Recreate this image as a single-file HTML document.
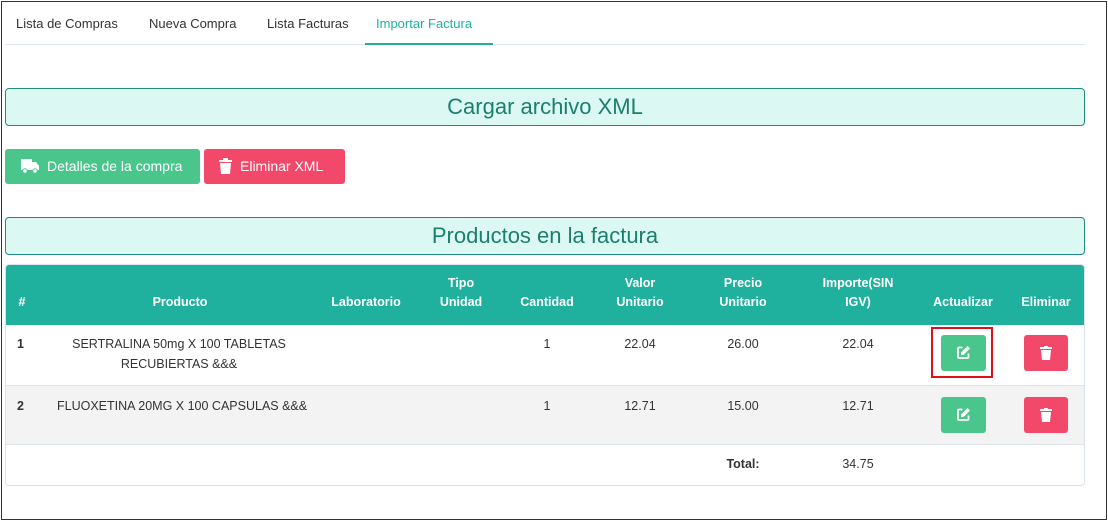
<!DOCTYPE html>
<html><head><meta charset="utf-8"><style>
*{box-sizing:border-box;margin:0;padding:0}
body{width:1108px;height:521px;background:#fff;font-family:"Liberation Sans",sans-serif;position:relative;overflow:hidden;color:#333}
.frame{position:absolute;left:1px;top:1px;width:1106px;height:519px;border:1px solid #333}
.abs{position:absolute}
.tab{position:absolute;top:16px;font-size:13px;color:#333}
.hbox{position:absolute;left:5px;width:1080px;height:38px;background:#dcf8f2;border:1px solid #1e8c7c;border-radius:4px;text-align:center;color:#1b7f6f;font-size:22px;line-height:36px}
.btn{position:absolute;top:149px;height:35px;border-radius:3px;color:#fff;font-size:14px;line-height:35px}
.th{position:absolute;color:#fff;font-weight:bold;font-size:12.5px;text-align:center;line-height:19px}
.td{position:absolute;font-size:12.5px;text-align:center;color:#333}
.eb{position:absolute;width:45px;height:36px;border-radius:3px;background:#4ac68d}
.db{position:absolute;width:44px;height:36px;border-radius:3px;background:#f2486a}
</style></head><body>
<div class="frame"></div>
<div class="tab" style="left:16px">Lista de Compras</div>
<div class="tab" style="left:149px">Nueva Compra</div>
<div class="tab" style="left:267px">Lista Facturas</div>
<div class="tab" style="left:376px;color:#20b09e">Importar Factura</div>
<div class="abs" style="left:5px;top:44px;width:1080px;height:1px;background:#dde6f0"></div>
<div class="abs" style="left:365px;top:43px;width:128px;height:2px;background:#20b09e"></div>

<div class="hbox" style="top:88px">Cargar archivo XML</div>
<div class="btn" style="left:5px;width:195px;background:#4ac68d;padding-left:42px">Detalles de la compra</div>
<svg class="abs" style="left:20px;top:158px" width="20" height="16" viewBox="0 0 20 16"><path d="M1 1h11v11H1z M12 4h4l3 4v4h-7z" fill="#fff"/><circle cx="5" cy="13" r="2.3" fill="#fff" stroke="#4ac68d"/><circle cx="15" cy="13" r="2.3" fill="#fff" stroke="#4ac68d"/></svg>
<div class="btn" style="left:204px;width:141px;background:#f2486a;padding-left:36px">Eliminar XML</div>
<svg class="abs" style="left:219px;top:158px" width="13" height="16" viewBox="0 0 13 16"><path d="M0 2h13v2H0z M4 0h5v2H4z M1 5h11l-1 11H2z" fill="#fff"/></svg>

<div class="hbox" style="top:217px">Productos en la factura</div>

<div class="abs" style="left:5px;top:264px;width:1080px;height:222px;border:1px solid #dde3ea;border-radius:4px;overflow:hidden">
<div class="abs" style="left:0;top:0;width:1080px;height:60px;background:#20b09e"></div>
<div class="abs" style="left:0;top:120px;width:1080px;height:60px;background:#f3f3f3;border-top:1px solid #dde3ea;border-bottom:1px solid #dde3ea"></div>
</div>
<div class="th" style="left:12px;top:293px;width:20px">#</div>
<div class="th" style="left:120px;top:293px;width:120px">Producto</div>
<div class="th" style="left:320px;top:293px;width:92px">Laboratorio</div>
<div class="th" style="left:425px;top:274px;width:72px">Tipo<br>Unidad</div>
<div class="th" style="left:507px;top:293px;width:80px">Cantidad</div>
<div class="th" style="left:600px;top:274px;width:80px">Valor<br>Unitario</div>
<div class="th" style="left:703px;top:274px;width:80px">Precio<br>Unitario</div>
<div class="th" style="left:808px;top:274px;width:100px">Importe(SIN<br>IGV)</div>
<div class="th" style="left:923px;top:293px;width:80px">Actualizar</div>
<div class="th" style="left:1011px;top:293px;width:70px">Eliminar</div>

<div class="td" style="left:17px;top:337px;font-weight:bold">1</div>
<div class="td" style="left:50px;top:334px;width:258px;line-height:20px">SERTRALINA 50mg X 100 TABLETAS<br>RECUBIERTAS &amp;&amp;&amp;</div>
<div class="td" style="left:527px;top:337px;width:40px">1</div>
<div class="td" style="left:600px;top:337px;width:80px">22.04</div>
<div class="td" style="left:703px;top:337px;width:80px">26.00</div>
<div class="td" style="left:818px;top:337px;width:80px">22.04</div>

<div class="td" style="left:17px;top:399px;font-weight:bold">2</div>
<div class="td" style="left:57px;top:399px">FLUOXETINA 20MG X 100 CAPSULAS &amp;&amp;&amp;</div>
<div class="td" style="left:527px;top:399px;width:40px">1</div>
<div class="td" style="left:600px;top:399px;width:80px">12.71</div>
<div class="td" style="left:703px;top:399px;width:80px">15.00</div>
<div class="td" style="left:818px;top:399px;width:80px">12.71</div>

<div class="td" style="left:703px;top:457px;width:80px;font-weight:bold">Total:</div>
<div class="td" style="left:818px;top:457px;width:80px">34.75</div>

<div class="abs" style="left:931px;top:327px;width:62px;height:51px;border:2px solid #e0101a"></div>
<div class="eb" style="left:941px;top:335px"></div>
<div class="eb" style="left:941px;top:397px"></div>
<div class="db" style="left:1024px;top:335px"></div>
<div class="db" style="left:1024px;top:397px"></div>
<svg class="abs" style="left:956px;top:345px" width="15" height="15" viewBox="0 0 15 15"><path d="M6.5 2.5H3a1 1 0 0 0-1 1V12a1 1 0 0 0 1 1h8.5a1 1 0 0 0 1-1V8.5" fill="none" stroke="#fff" stroke-width="1.8"/><path d="M11.5 1l2.5 2.5-6.5 6.5H5V7.5z" fill="#fff"/></svg>
<svg class="abs" style="left:956px;top:407px" width="15" height="15" viewBox="0 0 15 15"><path d="M6.5 2.5H3a1 1 0 0 0-1 1V12a1 1 0 0 0 1 1h8.5a1 1 0 0 0 1-1V8.5" fill="none" stroke="#fff" stroke-width="1.8"/><path d="M11.5 1l2.5 2.5-6.5 6.5H5V7.5z" fill="#fff"/></svg>
<svg class="abs" style="left:1040px;top:346px" width="12" height="14" viewBox="0 0 12 14"><path d="M0 1h12v2H0z M4 0h4v1H4z M1 4h10l-1 10H2z" fill="#fff"/></svg>
<svg class="abs" style="left:1040px;top:408px" width="12" height="14" viewBox="0 0 12 14"><path d="M0 1h12v2H0z M4 0h4v1H4z M1 4h10l-1 10H2z" fill="#fff"/></svg>
</body></html>
